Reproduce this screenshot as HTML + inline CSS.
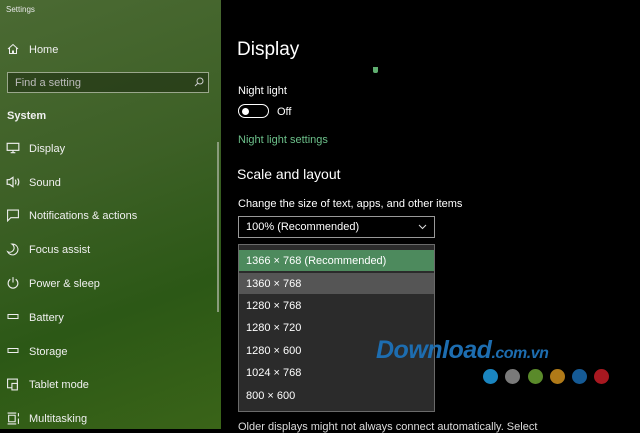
<!DOCTYPE html>
<html><head><style>
*{margin:0;padding:0;box-sizing:border-box}
body{width:640px;height:429px;overflow:hidden;background:#000;font-family:"Liberation Sans",sans-serif;position:relative;color:#fff}
#side{position:absolute;left:0;top:0;width:221px;height:429px;background:linear-gradient(160deg,#4b6a33 0%,#3d6026 40%,#2c5816 70%,#3a6418 100%)}
.t{position:absolute;white-space:nowrap}
.nav{position:absolute;left:29px;font-size:11px;color:#f0f0f0;margin-top:1px}
.ic{position:absolute;left:6px;width:14px;height:12px}
#main .t{color:#fff}
</style></head><body>
<div id="side">
<div class="t" style="left:6px;top:5px;font-size:8px;color:#e8e8e8">Settings</div>
<svg class="ic" style="top:43px" viewBox="0 0 12 12"><path d="M1 6L6 1.5 11 6M2.5 5v5.5h3V8h1v2.5h3V5" fill="none" stroke="#eee" stroke-width="1"/></svg>
<div class="nav" style="top:43px">Home</div>
<div style="position:absolute;left:7px;top:72px;width:202px;height:21px;border:1px solid #9aa78c;background:rgba(25,40,15,.55)"></div>
<div class="t" style="left:15px;top:77px;font-size:11px;color:#bbb">Find a setting</div>
<svg style="position:absolute;left:194px;top:77px" width="10" height="10" viewBox="0 0 10 10"><circle cx="6" cy="4" r="3" fill="none" stroke="#ccc"/><path d="M4 6L1 9" stroke="#ccc"/></svg>
<div class="t" style="left:7px;top:110px;font-size:11px;font-weight:bold;color:#f0f0f0">System</div>
<svg class="ic" style="top:142px" viewBox="0 0 12 10"><rect x="1" y="1" width="10" height="6" fill="none" stroke="#eee"/><path d="M4 9h4M6 7v2" stroke="#eee"/></svg>
<div class="nav" style="top:142px">Display</div>
<svg class="ic" style="top:176px" viewBox="0 0 12 10"><path d="M1 3h2l3-2v8L3 7H1z" fill="none" stroke="#eee"/><path d="M8 3q1 2 0 4M10 2q2 3 0 6" fill="none" stroke="#eee"/></svg>
<div class="nav" style="top:176px">Sound</div>
<svg class="ic" style="top:209px;height:13px" viewBox="0 0 12 12"><path d="M1 1h10v7H4l-3 3z" fill="none" stroke="#eee"/></svg>
<div class="nav" style="top:209px">Notifications &amp; actions</div>
<svg class="ic" style="top:243px;height:13px" viewBox="0 0 12 12"><path d="M5 1a5 5 0 1 1-4 7 4 4 0 0 0 4-7z" fill="none" stroke="#eee"/></svg>
<div class="nav" style="top:243px">Focus assist</div>
<svg class="ic" style="top:276px;height:13px" viewBox="0 0 12 12"><path d="M3.5 3a4.5 4.5 0 1 0 5 0M6 1v5" fill="none" stroke="#eee"/></svg>
<div class="nav" style="top:277px">Power &amp; sleep</div>
<svg class="ic" style="top:313px;height:8px" viewBox="0 0 12 8"><rect x="1" y="1.5" width="10" height="4" fill="none" stroke="#eee"/></svg>
<div class="nav" style="top:311px">Battery</div>
<svg class="ic" style="top:347px;height:8px" viewBox="0 0 12 8"><rect x="1" y="1.5" width="10" height="4" fill="none" stroke="#eee"/></svg>
<div class="nav" style="top:345px">Storage</div>
<svg class="ic" style="top:378px;height:13px" viewBox="0 0 12 12"><rect x="1" y="1" width="9" height="8" fill="none" stroke="#eee"/><rect x="5" y="5" width="5" height="6" fill="#3a6020" stroke="#eee"/></svg>
<div class="nav" style="top:378px">Tablet mode</div>
<svg class="ic" style="top:412px;height:13px" viewBox="0 0 12 12"><path d="M1 1h8M1 11h8M2 3h6v6H2zM11 1v3M11 6v5" fill="none" stroke="#eee"/></svg>
<div class="nav" style="top:412px">Multitasking</div>
<div style="position:absolute;left:217px;top:142px;width:2px;height:170px;background:#8a9c7c"></div>
</div>
<div id="main">
<div class="t" style="left:237px;top:39px;font-size:19px">Display</div>
<div style="position:absolute;left:373px;top:67px;width:5px;height:6px;background:#5fae70;border-radius:0 0 2px 2px"></div>
<div class="t" style="left:238px;top:85px;font-size:11px">Night light</div>
<div style="position:absolute;left:238px;top:104px;width:31px;height:14px;border:1.5px solid #fff;border-radius:8px"></div>
<div style="position:absolute;left:242px;top:108px;width:7px;height:7px;border-radius:50%;background:#fff"></div>
<div class="t" style="left:277px;top:106px;font-size:11px">Off</div>
<div class="t" style="left:238px;top:134px;font-size:11px;color:#6cc08a!important">Night light settings</div>
<div class="t" style="left:237px;top:166px;font-size:14px">Scale and layout</div>
<div class="t" style="left:238px;top:198px;font-size:11px">Change the size of text, apps, and other items</div>
<div style="position:absolute;left:238px;top:216px;width:197px;height:22px;border:1.5px solid #999"></div>
<div class="t" style="left:246px;top:221px;font-size:11px">100% (Recommended)</div>
<svg style="position:absolute;left:418px;top:224px" width="9" height="6" viewBox="0 0 9 6"><path d="M1 1l3.5 3.5L8 1" fill="none" stroke="#ddd"/></svg>
<div style="position:absolute;left:238px;top:244px;width:197px;height:168px;background:#2b2b2b;border:1px solid #6a6a6a"></div>
<div style="position:absolute;left:239px;top:250px;width:195px;height:21px;background:#4d8a5d"></div>
<div style="position:absolute;left:239px;top:273px;width:195px;height:21px;background:#555"></div>
<div class="t" style="left:246px;top:255px;font-size:11px">1366 × 768 (Recommended)</div>
<div class="t" style="left:246px;top:278px;font-size:11px">1360 × 768</div>
<div class="t" style="left:246px;top:300px;font-size:11px">1280 × 768</div>
<div class="t" style="left:246px;top:322px;font-size:11px">1280 × 720</div>
<div class="t" style="left:246px;top:345px;font-size:11px">1280 × 600</div>
<div class="t" style="left:246px;top:367px;font-size:11px">1024 × 768</div>
<div class="t" style="left:246px;top:390px;font-size:11px">800 × 600</div>
<div class="t" style="left:238px;top:421px;font-size:11px;color:#ddd!important">Older displays might not always connect automatically. Select</div>
<div class="t" style="left:376px;top:336px;font-size:25px;font-weight:bold;font-style:italic;color:#1d6db0!important;letter-spacing:-0.5px">Download<span style="font-size:16px">.com.vn</span></div>
<div style="position:absolute;left:483px;top:369px;width:15px;height:15px;border-radius:50%;background:#1a85c0"></div>
<div style="position:absolute;left:505px;top:369px;width:15px;height:15px;border-radius:50%;background:#7a7a7a"></div>
<div style="position:absolute;left:528px;top:369px;width:15px;height:15px;border-radius:50%;background:#5a8a2a"></div>
<div style="position:absolute;left:550px;top:369px;width:15px;height:15px;border-radius:50%;background:#b07a18"></div>
<div style="position:absolute;left:572px;top:369px;width:15px;height:15px;border-radius:50%;background:#155a95"></div>
<div style="position:absolute;left:594px;top:369px;width:15px;height:15px;border-radius:50%;background:#a81820"></div>
</div>
</body></html>
